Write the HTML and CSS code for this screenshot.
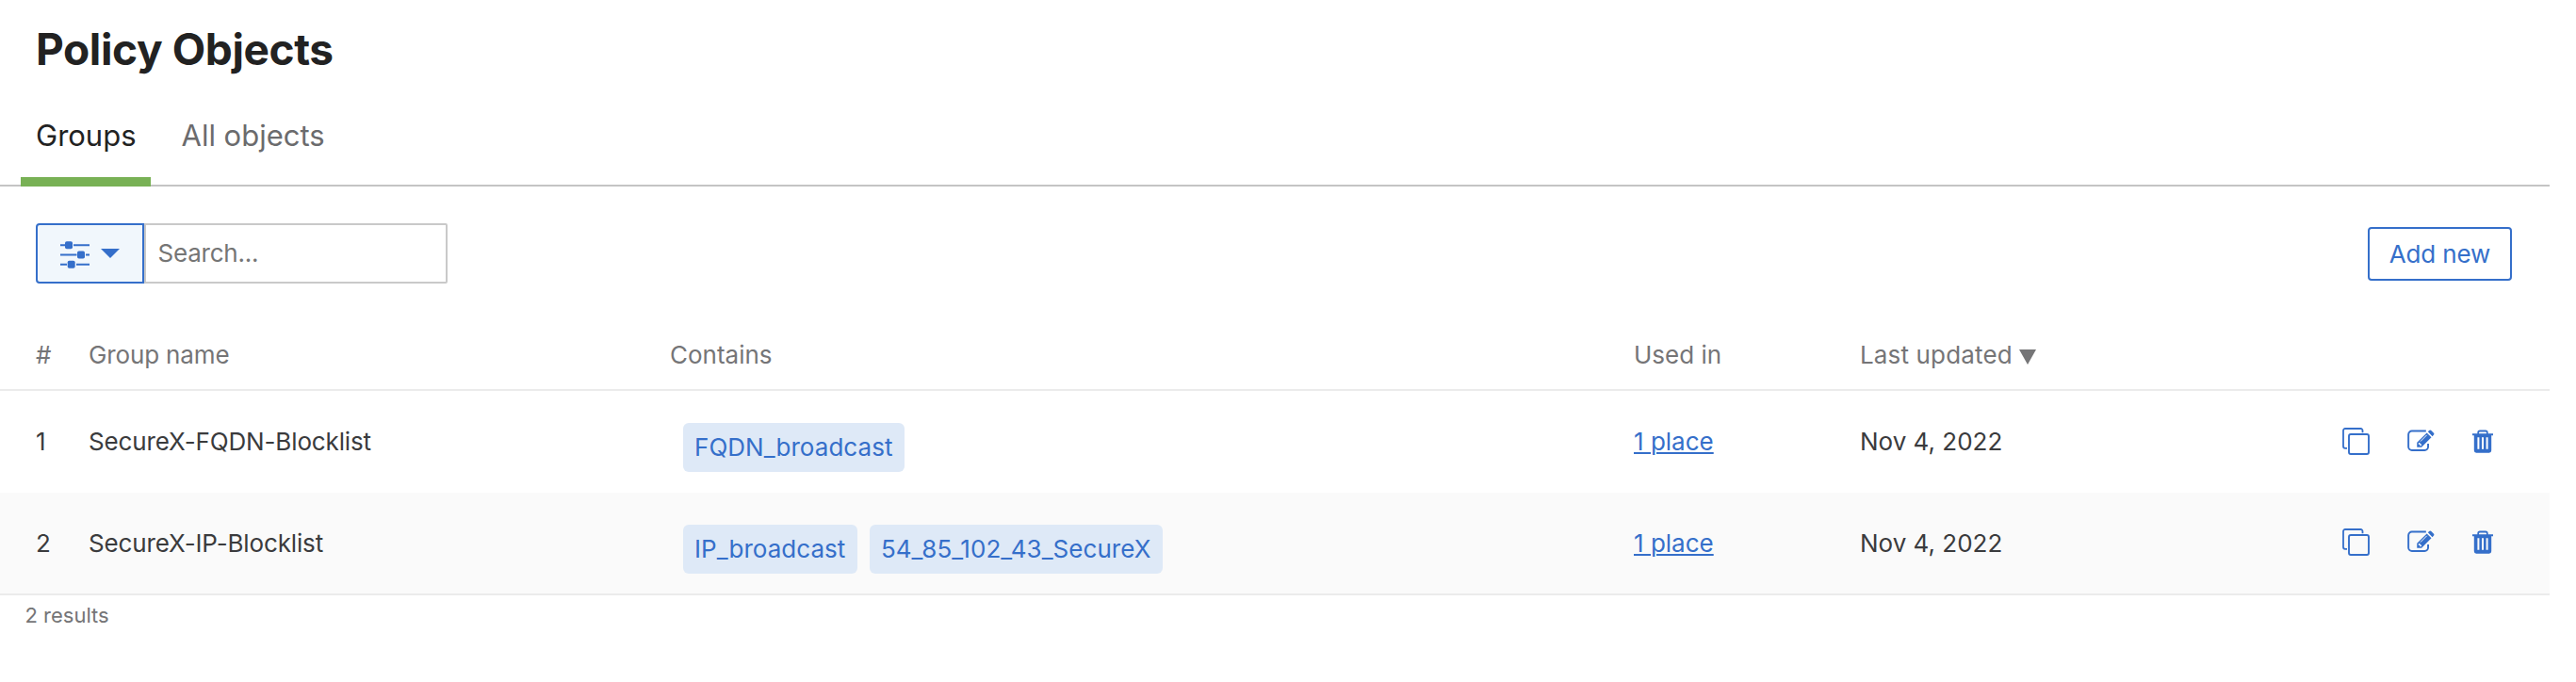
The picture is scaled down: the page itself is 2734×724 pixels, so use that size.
FILE: index.html
```html
<!DOCTYPE html>
<html lang="en">
<head>
<meta charset="utf-8">
<title>Policy Objects</title>
<link rel="stylesheet" href="styles.css">
</head>
<body>
<svg class="sprite" aria-hidden="true">
  <symbol id="copy" viewBox="0 0 29 29">
    <rect x="7" y="7" width="21" height="21" rx="2" fill="none" stroke="currentColor" stroke-width="1.9"/>
    <path d="M21.500 5.200V3a2 2 0 0 0-2-2H3a2 2 0 0 0-2 2v16.800a2 2 0 0 0 2 2h2" fill="none" stroke="currentColor" stroke-width="1.800"/>
  </symbol>
  <symbol id="edit" viewBox="0 0 30 24">
    <path d="M20.500 1.200H5a3.800 3.800 0 0 0-3.800 3.800v13.500A3.800 3.800 0 0 0 5 22.300h14a3.800 3.800 0 0 0 3.800-3.800v-3.500" fill="none" stroke="currentColor" stroke-width="2"/>
    <path fill="currentColor" d="M10.600 18.900v-5.100L21.400 3.200l5 4.900-10.800 10.800zM22.600 2l1.300-1.300a1.600 1.600 0 0 1 2.300 0l2.600 2.600a1.600 1.600 0 0 1 0 2.300L27.500 7z"/>
    <path d="M14.400 12.600l7-7" stroke="#fff" stroke-width="1" fill="none"/>
    <path d="M12.200 14.600v1.200h1.600v1.600h1.200l.8-.9-2.700-2.700z" fill="#fff"/>
  </symbol>
  <symbol id="trash" viewBox="0 0 24 25">
    <path fill="currentColor" fill-rule="evenodd" d="M1 4.300h5.300V3.200A2.700 2.700 0 0 1 9 .5h6a2.700 2.700 0 0 1 2.700 2.700v1.100H23v2h-1.800v16A2.400 2.400 0 0 1 18.800 24.700H5.200A2.400 2.400 0 0 1 2.800 22.300v-16H1zM8 4.300h8V3.400a1 1 0 0 0-1-1H9a1 1 0 0 0-1 1zM6.400 8.300v12.500h2V8.300zm4.600 0v12.500h2V8.300zm4.600 0v12.500h2V8.300z"/>
  </symbol>
</svg>
<main class="page">
  <header class="header">
    <h1 class="title">Policy Objects</h1>
    <nav class="tabs">
      <a class="tab tab-active">Groups</a>
      <a class="tab">All objects</a>
    </nav>
  </header>
  <div class="toolbar">
    <div class="search">
      <button class="filter" aria-label="Filter">
        <svg class="sliders" viewBox="0 0 31 30" fill="currentColor">
          <path d="M0 3.200h5v2H0zM14 3.200h17v2H14zM0 13.500h17.500v2H0zM27 13.500h4v2h-4zM0 23.800h7v2H0zM17 23.800h14v2H17z"/>
          <rect x="5" y="0.200" width="8" height="8" rx="1.800"/>
          <rect x="18" y="10.500" width="8" height="8" rx="1.800"/>
          <rect x="7.700" y="20.800" width="8" height="8" rx="1.800"/>
        </svg>
        <svg class="caret" viewBox="0 0 20 10"><path d="M0 0h20L10 10z" fill="currentColor"/></svg>
      </button>
      <input class="search-input" type="text" placeholder="Search...">
    </div>
    <button class="add">Add new</button>
  </div>
  <div class="table">
    <div class="row row-head">
      <div>#</div><div class="name">Group name</div><div>Contains</div><div>Used in</div>
      <div class="sorted">Last updated<svg class="sort" viewBox="0 0 18 16"><path d="M0 0h18L9 16z" fill="currentColor"/></svg></div>
      <div></div>
    </div>
    <div class="row">
      <div>1</div><div class="name">SecureX-FQDN-Blocklist</div>
      <div class="tags"><span class="tag">FQDN_broadcast</span></div>
      <div><a class="link" href="#">1 place</a></div><div>Nov 4, 2022</div>
      <div class="actions"><svg class="copy"><use href="#copy"/></svg><svg class="edit"><use href="#edit"/></svg><svg class="trash"><use href="#trash"/></svg></div>
    </div>
    <div class="row row-alt">
      <div>2</div><div class="name">SecureX-IP-Blocklist</div>
      <div class="tags"><span class="tag">IP_broadcast</span><span class="tag">54_85_102_43_SecureX</span></div>
      <div><a class="link" href="#">1 place</a></div><div>Nov 4, 2022</div>
      <div class="actions"><svg class="copy"><use href="#copy"/></svg><svg class="edit"><use href="#edit"/></svg><svg class="trash"><use href="#trash"/></svg></div>
    </div>
  </div>
  <p class="results">2 results</p>
</main>
</body>
</html>
```
FILE: styles.css
```css
* { box-sizing: border-box; }
body { margin: 0; background: #fff; color: #3a3b3d; font: 26px/32px Inter, sans-serif; }
.sprite { display: block; width: 0; height: 0; }
.page { width: 2706px; }
.header { height: 198px; padding: 23px 22px 0; border-bottom: 2px solid #c4c4c4; }
.title { margin: 0 0 0 16px; font-size: 46px; line-height: 58px; font-weight: 700; letter-spacing: -0.38px; color: #222; }
.tabs { display: flex; height: 117px; gap: 16.5px; }
.tab { height: 117px; padding: 43px 16px 0; font-size: 31px; line-height: 40px; color: #6b6b6d; }
.tab-active { width: 138px; color: #222; border-bottom: 10px solid #78b155; }
.toolbar { display: flex; justify-content: space-between; align-items: center; height: 142px; padding: 0 40px 0 38px; }
.search { display: flex; width: 437px; height: 64px; }
.filter { display: flex; align-items: center; width: 115px; padding: 0 0 0 24px; gap: 12px; border: 2px solid #356fca; border-radius: 4px 0 0 4px; background: #f1f7fc; color: #356fca; }
.sliders { width: 31px; height: 30px; margin-top: 3.4px; }
.caret { width: 20px; height: 10px; }
.search-input { flex: 1; min-width: 0; padding: 0 0 0 12.5px; border: 2px solid #c9c9c9; border-radius: 0 2px 2px 0; font: inherit; letter-spacing: -0.22px; }
.search-input::placeholder { color: #757575; }
.add { width: 153px; height: 57px; margin-top: 1px; padding: 0; border: 2px solid #356fca; border-radius: 4px; background: #fff; color: #356fca; font: inherit; letter-spacing: -0.15px; }
.row { display: grid; grid-template-columns: 56px 617px 1023px 240px 512px 1fr; height: 108px; padding: 38px 0 0 38px; }
.row-head { height: 75px; padding-top: 21px; border-bottom: 2px solid #ebebeb; color: #757577; }
.row-alt { height: 109px; border-bottom: 2px solid #ebebeb; background: #fafafa; }
.name { letter-spacing: -0.14px; }
.sorted { display: flex; align-items: flex-start; gap: 7px; letter-spacing: 0.15px; }
.sort { width: 18px; height: 16px; margin-top: 10px; }
.tags { display: flex; gap: 13px; padding-left: 14px; margin-top: -4px; }
.tag { height: 52px; padding: 10px 12.5px 10px 12px; border-radius: 6px; background: #dee9f7; color: #356fca; letter-spacing: 0.04px; }
.link { color: #356fca; text-decoration: underline; text-underline-offset: 2px; text-decoration-thickness: 2px; }
.actions { display: flex; align-items: flex-start; padding-top: 1px; color: #356fca; }
.row-alt .actions { padding-top: 0; }
.copy { width: 29px; height: 29px; }
.edit { width: 29px; height: 24px; margin: 2px 0 0 40px; }
.trash { width: 24px; height: 25px; margin: 2px 0 0 39px; }
.results { margin: 7px 0 0 26.5px; font-size: 22px; line-height: 28px; color: #757577; }
```
